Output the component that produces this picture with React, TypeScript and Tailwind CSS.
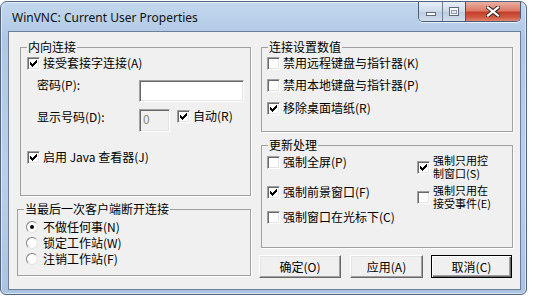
import React from 'react';

// classic 7x7 check glyph, one 3px column per x
const CHECK_Y = [2, 3, 4, 3, 2, 1, 0];

const Check = ({ checked }: { checked?: boolean }) => (
  <span className="w-[13px] h-[13px] shrink-0 bg-white border border-t-[#a0a0a0] border-l-[#a0a0a0] border-r-white border-b-white shadow-[inset_1px_1px_0_#696969,inset_-1px_-1px_0_#e3e3e3] flex items-center justify-center">
    {checked && (
      <svg width="7" height="7" viewBox="0 0 7 7" shapeRendering="crispEdges">
        {CHECK_Y.map((y, x) => (
          <rect key={x} x={x} y={y} width="1" height="3" fill="#000" />
        ))}
      </svg>
    )}
  </span>
);

const Radio = ({ checked }: { checked?: boolean }) => (
  <span className="w-[12px] h-[12px] shrink-0 rounded-full bg-white border border-t-[#808080] border-l-[#808080] border-r-[#e3e3e3] border-b-[#e3e3e3] flex items-center justify-center">
    {checked && <span className="w-[4px] h-[4px] rounded-full bg-black" />}
  </span>
);

const CheckRow = ({ checked, label, className = '' }: { checked?: boolean; label: string; className?: string }) => (
  <div className={`h-[16px] flex items-center gap-[3px] ${className}`}>
    <Check checked={checked} />
    <span className="whitespace-nowrap">{label}</span>
  </div>
);

const RadioRow = ({ checked, label }: { checked?: boolean; label: string }) => (
  <div className="h-[16px] flex items-center gap-[5px]">
    <Radio checked={checked} />
    <span className="whitespace-nowrap">{label}</span>
  </div>
);

const Legend = ({ children }: { children: React.ReactNode }) => (
  <legend className="ml-[6px] px-[1px] leading-[14px] bg-[#f0f0f0]">{children}</legend>
);

const sunken =
  'border border-t-[#a0a0a0] border-l-[#a0a0a0] border-r-white border-b-white shadow-[inset_1px_1px_0_#696969,inset_-1px_-1px_0_#e3e3e3]';

const groupBox = 'border border-[#a0a0a0] shadow-[1px_1px_0_#fff]';

export default function App() {
  return (
    <div className="w-[533px] h-[301px] bg-white pt-[1px] font-['Noto_Sans_CJK_SC','Liberation_Sans',sans-serif] text-[12px] text-black overflow-hidden">
      {/* window frame */}
      <div className="w-[527px] h-[294px] rounded-t-[7px] rounded-b-[6px] border border-[#4f6582] bg-[linear-gradient(180deg,#c3d8ee_0%,#aec8e4_12%,#b9d0ea_60%,#a9c3e1_100%)] shadow-[inset_0_0_0_1px_rgba(255,255,255,0.55)] flex flex-col">
        {/* title bar */}
        <div className="h-[29px] flex items-start">
          <span className="ml-[11px] mt-[8px] leading-[16px] font-['Noto_Sans','Liberation_Sans',sans-serif] text-[12px] text-[#111]">
            WinVNC: Current User Properties
          </span>
          <div className="ml-auto mr-[5px] h-[20px] flex rounded-b-[5px] border border-t-0 border-[#4a5d78] overflow-hidden shadow-[0_1px_0_rgba(255,255,255,0.7)]">
            <div className="w-[24px] border-r border-[#6e819b] bg-[linear-gradient(180deg,#e9eff8,#cdd9e9_50%,#bccbe0_51%,#d3dfee)] flex items-end justify-center pb-[5px]">
              <span className="w-[10px] h-[4px] bg-white border border-[#5c6b80]" />
            </div>
            <div className="w-[23px] border-r border-[#5a4d55] bg-[linear-gradient(180deg,#e9eff8,#cdd9e9_50%,#bccbe0_51%,#d3dfee)] flex items-center justify-center">
              <span className="w-[10px] h-[9px] border border-[#5c6b80] bg-white flex items-center justify-center">
                <span className="w-[6px] h-[4px] border border-[#8c9aad] bg-[#e6ecf4]" />
              </span>
            </div>
            <div className="w-[54px] bg-[linear-gradient(180deg,#eab0a2_0%,#dc7a66_45%,#c5402c_55%,#d0573f_80%,#e0876f_100%)] flex items-center justify-center">
              <svg width="14" height="11" viewBox="0 0 14 11">
                <path d="M2 1.5 L12 9.5 M12 1.5 L2 9.5" stroke="#3b2a2a" strokeWidth="4.2" strokeLinecap="square" />
                <path d="M2 1.5 L12 9.5 M12 1.5 L2 9.5" stroke="#fff" strokeWidth="2.2" strokeLinecap="square" />
              </svg>
            </div>
          </div>
        </div>

        {/* client area */}
        <div className="ml-[7px] w-[513px] h-[259px] border border-[#6c7f98] bg-[#f0f0f0]">
          <div className="flex pl-[8px] pt-[8px]">
            {/* left column */}
            <div className="w-[234px] flex flex-col">
              <fieldset className={`ml-[3px] w-[231px] h-[156px] ${groupBox}`}>
                <Legend>内向连接</Legend>
                <CheckRow checked label="接受套接字连接(A)" className="mt-[1px] pl-[6px]" />
                <div className="mt-[9px] pl-[16px] flex items-start">
                  <span className="w-[102px] -mt-[2px] leading-[14px]">密码(P):</span>
                  <div className={`w-[105px] h-[22px] bg-white ${sunken}`} />
                </div>
                <div className="mt-[7px] pl-[16px] flex items-start">
                  <span className="w-[102px] mt-[1px] leading-[14px]">显示号码(D):</span>
                  <div className={`w-[31px] h-[23px] bg-[#f0f0f0] ${sunken} pl-[3px] leading-[18px] text-[#8a8a8a]`}>0</div>
                  <div className="ml-[7px] h-[14px] flex items-center gap-[3px]">
                    <Check checked />
                    <span>自动(R)</span>
                  </div>
                </div>
                <CheckRow checked label="启用 Java 查看器(J)" className="mt-[17px] pl-[6px]" />
              </fieldset>

              <fieldset className={`mt-[6px] w-[234px] h-[74px] ${groupBox}`}>
                <Legend>当最后一次客户端断开连接</Legend>
                <div className="mt-[3px] pl-[8px] flex flex-col">
                  <RadioRow checked label="不做任何事(N)" />
                  <RadioRow label="锁定工作站(W)" />
                  <RadioRow label="注销工作站(F)" />
                </div>
              </fieldset>
            </div>

            {/* right column */}
            <div className="ml-[10px] w-[252px] flex flex-col">
              <fieldset className={`w-[252px] h-[92px] ${groupBox}`}>
                <Legend>连接设置数值</Legend>
                <div className="pl-[5px] flex flex-col">
                  <CheckRow label="禁用远程键盘与指针器(K)" className="mt-[1px]" />
                  <CheckRow label="禁用本地键盘与指针器(P)" className="mt-[6px]" />
                  <CheckRow checked label="移除桌面墙纸(R)" className="mt-[7px]" />
                </div>
              </fieldset>

              <fieldset className={`mt-[6px] w-[252px] h-[110px] ${groupBox}`}>
                <Legend>更新处理</Legend>
                <div className="flex">
                  <div className="w-[155px] pl-[5px] flex flex-col">
                    <CheckRow label="强制全屏(P)" className="mt-[2px]" />
                    <CheckRow checked label="强制前景窗口(F)" className="mt-[14px]" />
                    <CheckRow label="强制窗口在光标下(C)" className="mt-[9px]" />
                  </div>
                  <div className="flex flex-col">
                    <div className="mt-[2px] flex items-center gap-[3px]">
                      <Check checked />
                      <span className="flex flex-col text-[11px] leading-[13px] whitespace-nowrap">
                        <span>强制只用控</span>
                        <span>制窗口(S)</span>
                      </span>
                    </div>
                    <div className="mt-[4px] flex items-center gap-[3px]">
                      <Check />
                      <span className="flex flex-col text-[11px] leading-[13px] whitespace-nowrap">
                        <span>强制只用在</span>
                        <span>接受事件(E)</span>
                      </span>
                    </div>
                  </div>
                </div>
              </fieldset>

              <div className="mt-[7px] -ml-[2px] flex">
                <button className="w-[82px] h-[23px] bg-[#f0f0f0] border border-t-white border-l-white border-r-[#696969] border-b-[#696969] shadow-[inset_-1px_-1px_0_#a0a0a0,inset_1px_1px_0_#e3e3e3] leading-[20px]">
                  确定(O)
                </button>
                <button className="ml-[9px] w-[73px] h-[23px] bg-[#f0f0f0] border border-t-white border-l-white border-r-[#696969] border-b-[#696969] shadow-[inset_-1px_-1px_0_#a0a0a0,inset_1px_1px_0_#e3e3e3] leading-[20px]">
                  应用(A)
                </button>
                <button className="ml-[8px] w-[81px] h-[23px] bg-[#f0f0f0] border border-black shadow-[inset_1px_1px_0_#fff,inset_-1px_-1px_0_#696969,inset_-2px_-2px_0_#a0a0a0] leading-[20px]">
                  取消(C)
                </button>
              </div>
            </div>
          </div>
        </div>
      </div>
    </div>
  );
}
